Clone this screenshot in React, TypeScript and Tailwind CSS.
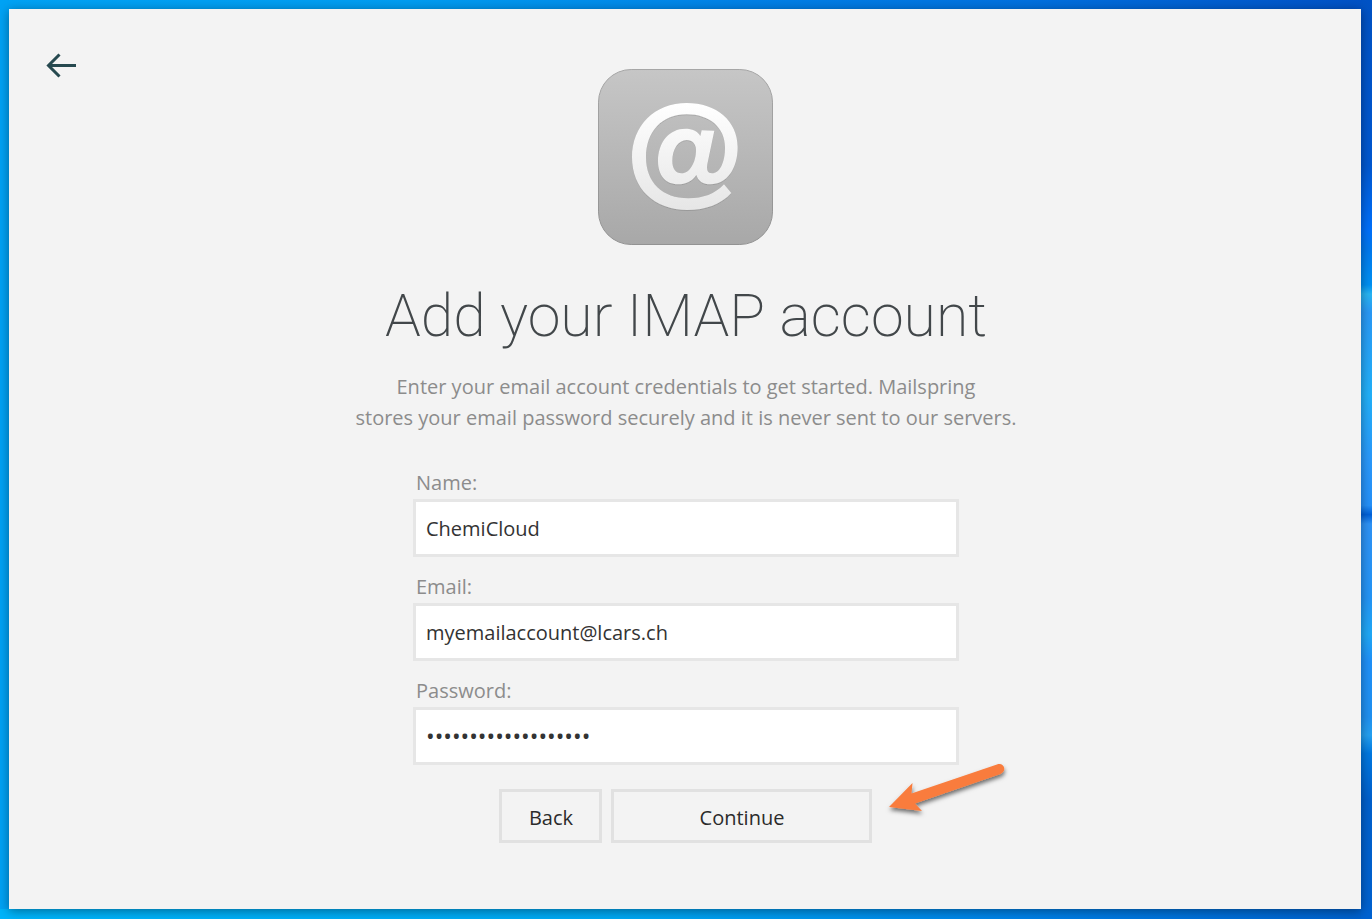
import { useState } from "react";

function AtLogo() {
  return (
    <svg viewBox="24 27 525 528" className="h-44 w-[175px]" role="img" aria-label="IMAP account">
      <defs>
        <linearGradient id="tile" x1="0" y1="0" x2="0" y2="1">
          <stop offset="0" stopColor="#c6c6c6" />
          <stop offset="1" stopColor="#a8a8a8" />
        </linearGradient>
        <linearGradient id="tile-edge" x1="0" y1="0" x2="0" y2="1">
          <stop offset="0" stopColor="#a6a6a6" />
          <stop offset="1" stopColor="#929292" />
        </linearGradient>
        <linearGradient id="sign" x1="0" y1="0" x2="0" y2="1">
          <stop offset="0" stopColor="#ffffff" />
          <stop offset="1" stopColor="#e6e6e6" />
        </linearGradient>
        <filter id="sign-shadow" x="-10%" y="-10%" width="120%" height="120%">
          <feDropShadow dx="0" dy="1" stdDeviation="2" floodColor="#000" floodOpacity="0.35" />
        </filter>
      </defs>
      <rect x="25.5" y="28.5" width="522" height="525" rx="98" fill="url(#tile)" stroke="url(#tile-edge)" strokeWidth="3" />
      <path
        filter="url(#sign-shadow)"
        fill="url(#sign)"
        fillRule="evenodd"
        d="M424 399C394 432 348 450 292 450C192 450 126 386 126 292C126 197 194 129 290 129C380 129 443 183 443 262C443 326 411 373 361 373C339 373 324 363 319 345C306 364 288 373 264 373C227 373 204 346 204 304C204 246 238 206 286 206C307 206 322 213 331 228L335 211L373 212L352 313C349 330 353 340 366 340C389 340 405 309 405 262C405 203 359 163 290 163C217 163 168 214 168 292C168 368 217 415 295 415C340 415 374 402 402 373ZM290 240C265 240 247 268 247 303C247 326 257 340 275 340C299 340 318 307 318 270C318 252 307 240 290 240Z"
      />
    </svg>
  );
}

function PointerArrow() {
  return (
    <svg
      viewBox="0 0 150 80"
      className="pointer-events-none absolute -top-[39px] left-full h-20 w-[150px]"
      aria-hidden="true"
    >
      <defs>
        <filter id="arrow-shadow" x="-20%" y="-20%" width="140%" height="150%">
          <feDropShadow dx="0.5" dy="3" stdDeviation="2" floodColor="#000" floodOpacity="0.55" />
        </filter>
      </defs>
      <path
        filter="url(#arrow-shadow)"
        fill="#f97c3c"
        d="M17 57L40.500 33L39.500 43.500L125 14.500C132 12 135.500 21 128.500 24L43 53.500L50 61Z"
      />
    </svg>
  );
}

type FieldProps = {
  id: string;
  label: string;
  type: string;
  value: string;
  onChange: (value: string) => void;
};

function Field({ id, label, type, value, onChange }: FieldProps) {
  return (
    <div className="flex flex-col">
      <label htmlFor={id} className="pl-[3px] leading-8 text-[#8c8c8c]">
        {label}
      </label>
      <input
        id={id}
        type={type}
        value={value}
        onChange={(e) => onChange(e.target.value)}
        className={`h-[58px] w-full border-3 border-[#e6e6e6] bg-white px-[10px] text-[#333] outline-none ${
          type === "password" ? "text-[23px]" : "text-xl"
        }`}
      />
    </div>
  );
}

export default function App() {
  const [name, setName] = useState("ChemiCloud");
  const [email, setEmail] = useState("myemailaccount@lcars.ch");
  const [password, setPassword] = useState("mailspring-password");

  return (
    <div className="grid min-h-screen bg-[linear-gradient(180deg,#0052c4_0%,#0058d0_18%,#0070fa_25%,#0078ee_27%,#0090f2_31%,#28b4f2_32%,#2a98f5_34%,#22b0f8_43%,#2a98fa_50%,#2590f8_55%,#0060d8_56%,#2e92f5_57%,#2494f5_65%,#20a8f5_69%,#1f90f8_72%,#2090f0_78%,#25a0f0_80%,#0078e0_82%,#0060cc_87%,#0062d0_100%),linear-gradient(90deg,#00b4fa_0%,#00a8f2_45%,#0080e6_75%,#0060cc_100%),linear-gradient(90deg,#00a2f4_0%,#009cf0_30%,#0080e6_55%,#0070de_75%,#0050c4_100%)] bg-[length:11px_100%,100%_10px,100%_100%] bg-[position:right_top,left_bottom,left_top] bg-no-repeat pt-[9px] pr-[11px] pb-[10px] pl-[9px] font-['Open_Sans','Noto_Sans',sans-serif] text-xl">
      <div className="grid grid-cols-[1fr_auto_1fr] bg-[#f3f3f3] shadow-[0_2px_10px_rgba(0,0,0,0.4)]">
        <button type="button" aria-label="Go back" className="mt-11 ml-[37px] h-[26px] w-[31px] self-start">
          <svg viewBox="0 0 31 26" className="h-[26px] w-[31px]" fill="none" stroke="#26494f" strokeWidth="3">
            <path d="M30 12.500H3M13.500 1.500L2.500 12.500L13.500 23.500" />
          </svg>
        </button>

        <main className="flex flex-col items-center pt-15 pb-10 pl-[2px]">
          <AtLogo />
          <h1 className="mt-[41px] font-['Roboto',sans-serif] text-[59px] leading-[60px] font-extralight text-[#42474a]">
            Add your IMAP account
          </h1>
          <p className="mt-[25px] text-center leading-[31px] text-[#8c8c8c]">
            Enter your email account credentials to get started. Mailspring
            <br />
            stores your email password securely and it is never sent to our servers.
          </p>

          <form className="mt-[34px] flex w-[546px] flex-col gap-[14px]" onSubmit={(e) => e.preventDefault()}>
            <Field id="name" label="Name:" type="text" value={name} onChange={setName} />
            <Field id="email" label="Email:" type="text" value={email} onChange={setEmail} />
            <Field id="password" label="Password:" type="password" value={password} onChange={setPassword} />
            <div className="mt-[10px] flex justify-center gap-[9px] text-[#2b2b2b]">
              <button type="button" className="h-[54px] w-[103px] border-3 border-[#e1e1e1] pt-[3px]">
                Back
              </button>
              <div className="relative">
                <button type="submit" className="h-[54px] w-[261px] border-3 border-[#e1e1e1] pt-[3px]">
                  Continue
                </button>
                <PointerArrow />
              </div>
            </div>
          </form>
        </main>
      </div>
    </div>
  );
}
